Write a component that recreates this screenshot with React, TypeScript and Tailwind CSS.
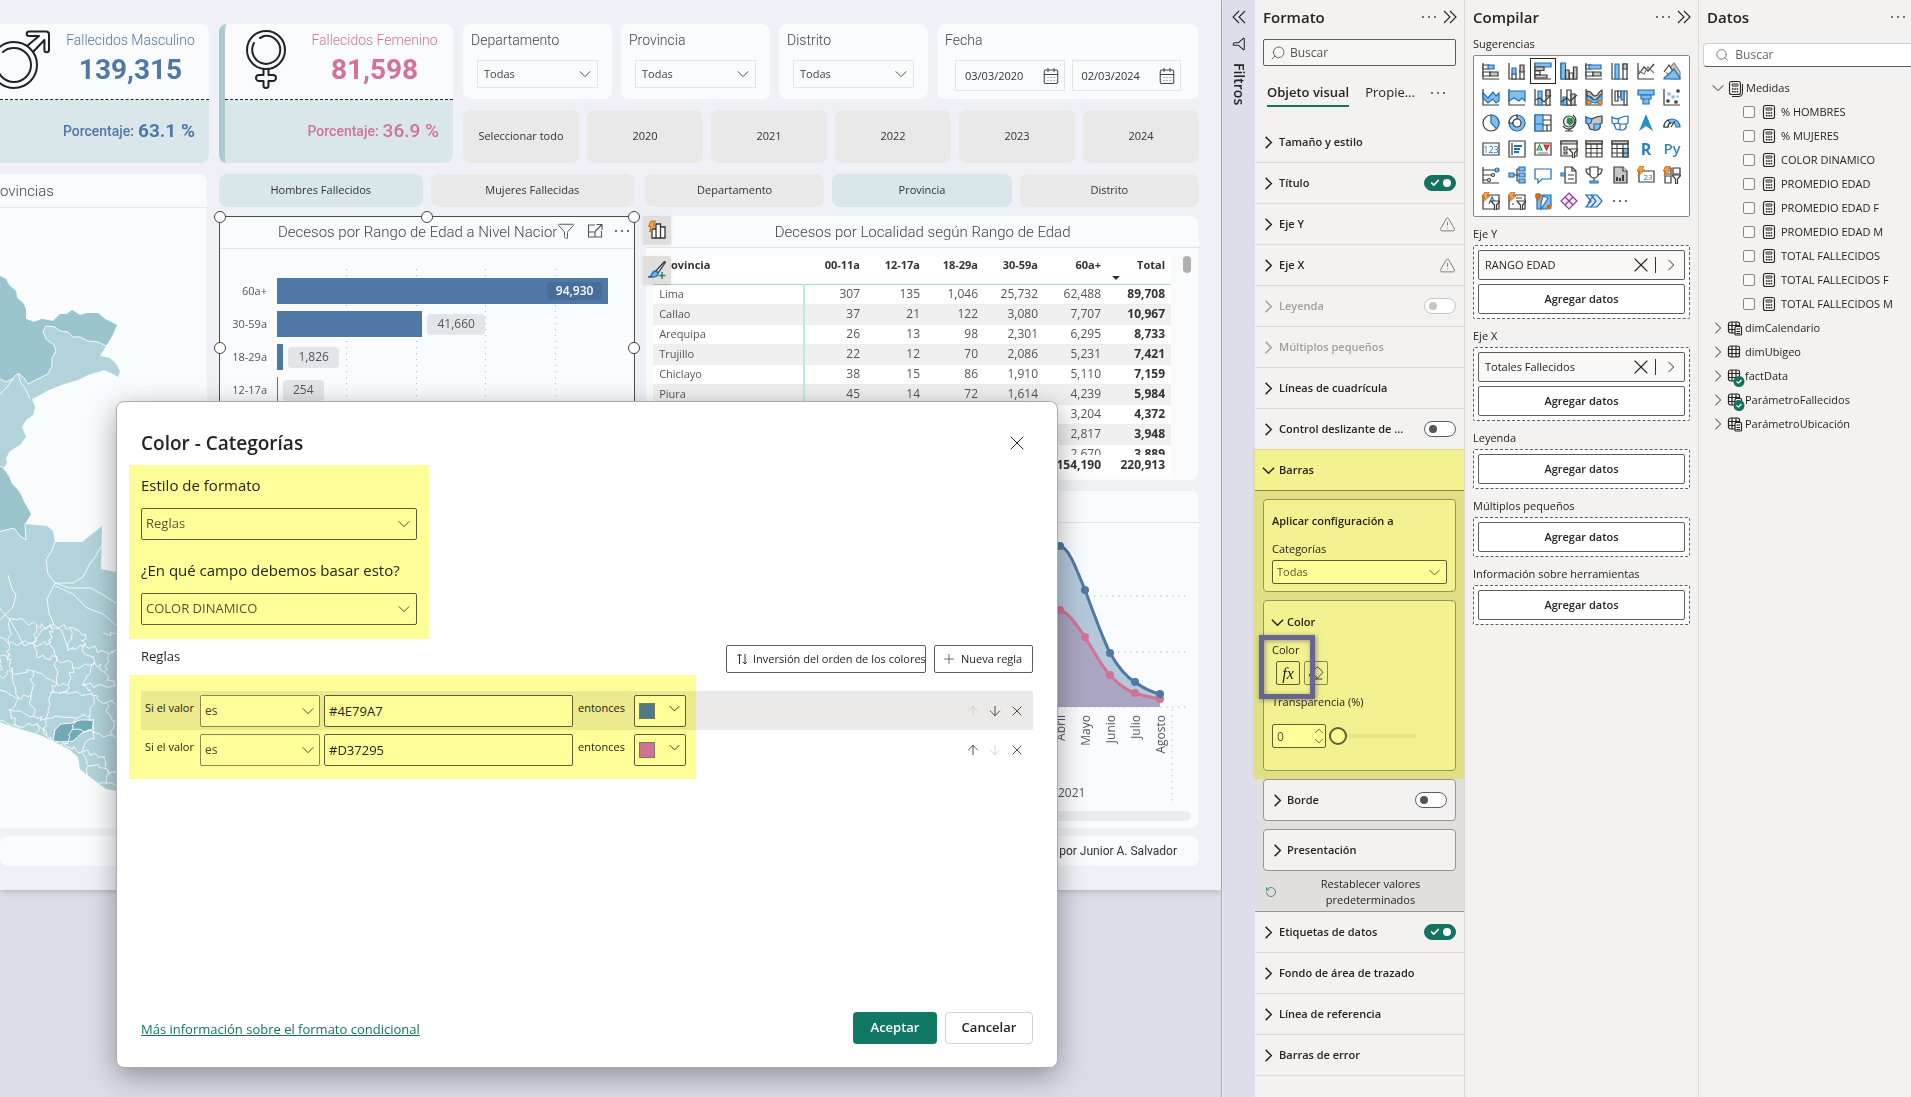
import type { ReactNode } from "react";
import { ArrowDown, ArrowUp, CalendarDays, Check, Eraser, Filter, Plus, RotateCcw, Search, TriangleAlert, X } from "lucide-react";

const UI = "font-['Open_Sans','Noto_Sans',sans-serif]";
const DIN = "font-[Roboto,'Open_Sans',sans-serif]";

/* ---------- shared controls ---------- */

const CHEVRONS = {
  right: "m5 2 6 6-6 6",
  down: "m2 5 6 6 6-6",
  up: "m2 11 6-6 6 6",
  left2: "M8 2 2 8l6 6M14 2 8 8l6 6",
  right2: "m2 2 6 6-6 6M8 2l6 6-6 6",
};

function Chevron({ dir, bold = false, className = "size-4" }: { dir: keyof typeof CHEVRONS; bold?: boolean; className?: string }) {
  return (
    <svg viewBox="0 0 16 16" className={`shrink-0 ${className}`} fill="none" stroke="currentColor" strokeWidth={bold ? 1.6 : 1.1}>
      <path d={CHEVRONS[dir]} />
    </svg>
  );
}

function Dots({ className = "" }: { className?: string }) {
  return (
    <button aria-label="Más opciones" className={`flex items-center gap-1 ${className}`}>
      <i className="size-0.5 rounded-full bg-[#444]" />
      <i className="size-0.5 rounded-full bg-[#444]" />
      <i className="size-0.5 rounded-full bg-[#444]" />
    </button>
  );
}

function Dropdown({
  label,
  value,
  box,
  icon = "right-[6px] size-[14px]",
}: {
  label: string;
  value: string;
  box: string;
  icon?: string;
}) {
  return (
    <div className="relative flex items-center">
      <select aria-label={label} className={`w-full appearance-none ${box}`}>
        <option>{value}</option>
      </select>
      <Chevron dir="down" className={`pointer-events-none absolute text-[#444] ${icon}`} />
    </div>
  );
}

function Toggle({ label, on = false, disabled = false }: { label: string; on?: boolean; disabled?: boolean }) {
  return (
    <span className="relative inline-flex h-4 w-8 shrink-0">
      <input
        type="checkbox"
        role="switch"
        aria-label={label}
        defaultChecked={on}
        disabled={disabled}
        className="h-4 w-8 appearance-none rounded-full border border-[#605e5c] bg-white checked:border-[#14735f] checked:bg-[#14735f] disabled:border-[#c8c6c4]"
      />
      {on ? (
        <>
          <Check strokeWidth={4} className="pointer-events-none absolute top-[3px] left-[6px] size-[10px] text-white" />
          <i className="pointer-events-none absolute top-1 right-[5px] size-2 rounded-full bg-white" />
        </>
      ) : (
        <i
          className={`pointer-events-none absolute top-1 left-[5px] size-2 rounded-full ${disabled ? "bg-[#c8c6c4]" : "bg-[#555]"}`}
        />
      )}
    </span>
  );
}

/* ---------- report cards ---------- */

function MaleIcon() {
  return (
    <svg viewBox="0 28 52 62" className="h-[62px] w-[52px] shrink-0" fill="none" stroke="#222" strokeWidth="2" strokeLinejoin="round" strokeLinecap="round">
      <circle cx="14" cy="65" r="23" />
      <path d="M-3 65a17 17 0 1 0 17-17q-7 0-11 4" />
      <path d="M27 46 39 36H29a2.300 2.300 0 0 1 0-4.600H46a3 3 0 0 1 3 3V50a2.300 2.300 0 0 1-4.600 0V40L33 52" />
    </svg>
  );
}

function FemaleIcon() {
  return (
    <svg viewBox="244 28 44 64" className="h-16 w-11 shrink-0" fill="none" stroke="#222" strokeWidth="2" strokeLinejoin="round" strokeLinecap="round">
      <circle cx="266" cy="50" r="19" />
      <path d="M254 43a14 14 0 1 0 10-7l-4 2" />
      <path d="M263.500 69v6H259a2.800 2.800 0 0 0 0 6h4.500v4.500a2.500 2.500 0 0 0 5 0V81h4.500a2.800 2.800 0 0 0 0-6h-4.500v-6" />
    </svg>
  );
}

function Kpi({
  icon,
  title,
  total,
  percent,
  tone,
  percentWeight,
  accent,
}: {
  icon: ReactNode;
  title: string;
  total: string;
  percent: string;
  tone: string;
  percentWeight: string;
  accent: boolean;
}) {
  return (
    <section
      className={`flex shrink-0 flex-col overflow-hidden rounded-r-lg bg-[#fafbfd] ${tone} ${
        accent ? "w-[234px] rounded-l-lg border-l-[6px] border-[#a9cbd1]" : "w-[209px]"
      }`}
    >
      <div className={`flex h-[76px] border-b border-dashed border-[#222] pt-1 ${accent ? "pl-[19px]" : ""}`}>
        {icon}
        <div className={`flex flex-1 flex-col items-center ${accent ? "pr-2 pl-4" : ""}`}>
          <h3 className={`text-[14px] leading-6 font-light ${DIN}`}>{title}</h3>
          <p className={`text-[28px] leading-9 font-bold ${DIN}`}>{total}</p>
        </div>
      </div>
      <p className={`flex flex-1 items-center justify-end bg-[#d9e6ea] pr-[14px] text-[14px] font-medium ${DIN}`}>
        Porcentaje:<span className={`ml-1 text-[19px] ${percentWeight}`}>{percent}</span>
      </p>
    </section>
  );
}

function FilterCard({ name }: { name: string }) {
  return (
    <section className="h-[75px] flex-1 rounded-lg bg-[#fafbfd] px-[14px] pt-1 text-[#444]">
      <h3 className={`-ml-[6px] h-8 text-[14px] leading-6 font-light ${DIN}`}>{name}</h3>
      <Dropdown label={name} value="Todas" box={`h-7 border border-[#e3e4e8] bg-[#fafbfd] pl-[6px] text-[11px] ${UI}`} />
    </section>
  );
}

function DateField({ label, value }: { label: string; value: string }) {
  return (
    <div className="relative flex flex-1 items-center">
      <input
        aria-label={label}
        defaultValue={value}
        className={`h-[31px] w-full border border-[#e3e4e8] bg-[#fafbfd] pl-[9px] text-[11px] text-[#333] ${UI}`}
      />
      <CalendarDays strokeWidth={1.4} className="pointer-events-none absolute right-[5px] size-[18px] text-[#444]" />
    </div>
  );
}

function Chip({ text, active = false, tall = false }: { text: string; active?: boolean; tall?: boolean }) {
  return (
    <button
      className={`flex-1 rounded-lg text-[11px] font-medium whitespace-nowrap text-[#333] ${tall ? "h-[53px]" : "h-[33px]"} ${
        active ? "bg-[#d9e6ea]" : "bg-[#e9e9ea]"
      } ${UI}`}
    >
      {text}
    </button>
  );
}

/* Deterministic jagged province borders. */
function provinceMesh() {
  let seed = 11;
  const rnd = () => {
    seed = (seed * 16807) % 2147483647;
    return seed / 2147483647 - 0.5;
  };
  const pts: number[][][] = [];
  for (let r = 0; r < 11; r++) {
    pts.push([]);
    for (let c = 0; c < 8; c++) pts[r].push([c * 19 - 6 + rnd() * 13, 622 + r * 17 + c * 2 + rnd() * 12]);
  }
  const seg = (a: number[], b: number[]) => {
    let d = `M${a[0].toFixed(1)} ${a[1].toFixed(1)}`;
    for (let i = 1; i < 5; i++) {
      const t = i / 5;
      d += `L${(a[0] + (b[0] - a[0]) * t + rnd() * 6).toFixed(1)} ${(a[1] + (b[1] - a[1]) * t + rnd() * 6).toFixed(1)}`;
    }
    return `${d}L${b[0].toFixed(1)} ${b[1].toFixed(1)}`;
  };
  let d = "";
  for (let r = 0; r < 11; r++)
    for (let c = 0; c < 8; c++) {
      if (c < 7 && (r + c * 3) % 5 !== 0) d += seg(pts[r][c], pts[r][c + 1]);
      if (r < 10 && (r * 2 + c) % 6 !== 0) d += seg(pts[r][c], pts[r + 1][c]);
    }
  return d;
}

const COUNTRY =
  "M0 276 6 279 9 285 16 291 17 298 23 303 26 309 26 319 34 322 42 319 53 321 60 314 67 314 72 310 80 315 88 313 98 313 105 319 117 325 112 336 106 346 100 356 110 358 116 364 120 371 118 377 111 373 104 370 98 372 88 375 78 380 64 384 49 390 40 395 32 399 35 407 33 415 26 420 22 427 26 437 20 445 10 451 6 458 7 463 3 469 8 474 12 484 20 492 24 502 31 514 25 524 47 526 53 531 55 542 82 542 92 534 102 526 101 569 116 572V791L106 789 90 777 80 769 78 757 70 750 53 741 40 735 24 730 10 726 0 722Z";

function PeruMap() {
  return (
    <svg viewBox="0 208 207 620" preserveAspectRatio="xMinYMin meet" className="h-[620px] w-[207px]">
      <defs>
        <clipPath id="country">
          <path d={COUNTRY} />
        </clipPath>
      </defs>
      <path d={COUNTRY} fill="#b1d3d9" />
      <g clipPath="url(#country)" stroke="#f4fafb" strokeWidth="1" strokeLinejoin="round">
        <path
          fill="#9ac5cc"
          d="M-2 270H125V325L106 346 98 342 88 341 80 337 73 337 68 332 60 331 55 327 46 326 43 331 46 339 54 345 56 351 52 358 52 366 48 374 40 378 28 384 24 378 18 373 12 379 6 382-2 378Z"
        />
        <path fill="#9ac5cc" d="M-2 466 3 467 34 514 25 524 26 540 20 536 14 528 6 530-2 532Z" />
        <path fill="#71a9b6" d="M53 741 55 730 61 724 72 723 80 720 94 720 92 730 83 732 73 741 61 742Z" />
        <g fill="none">
          <path d="M18 373 20 381 26 390 30 399M0 394 8 386 14 377M8 575 12 589 16 595 13 607 0 620M46 560 48 574 55 583 73 583 83 577 89 565 95 557 103 543M55 542 51 552 46 560M55 583 69 588 91 588 105 596 117 604M55 583 47 599 49 613 54 625 62 631 68 649M55 586 73 594 87 608 103 614 117 626M-2 606 10 620 18 634 24 646 34 642 42 630 54 624" />
          <path d={provinceMesh()} />
        </g>
      </g>
    </svg>
  );
}

const AGE_BARS = [
  { label: "60a+", value: 94930, inside: true },
  { label: "30-59a", value: 41660 },
  { label: "18-29a", value: 1826 },
  { label: "12-17a", value: 254 },
];

function Handle({ at }: { at: string }) {
  return <i className={`absolute z-10 size-3 -translate-1/2 rounded-full border border-[#444] bg-white ${at}`} />;
}

function AgeChart() {
  return (
    <section className="relative min-w-0 flex-[415] border border-[#4a4a4a] bg-[#fafbfd]">
      <Handle at="top-0 left-0" />
      <Handle at="top-0 left-1/2" />
      <Handle at="top-0 left-full" />
      <Handle at="top-1/2 left-0" />
      <Handle at="top-1/2 left-full" />
      <header className="flex h-8 items-center border-b border-[#dbe8ea] pl-[58px]">
        <h2 className={`min-w-0 flex-1 overflow-hidden text-[15px] font-light whitespace-nowrap text-[#444] ${DIN}`}>
          Decesos por Rango de Edad a Nivel Nacional
        </h2>
        <div className="mb-1 flex shrink-0 items-center gap-3 pr-[5px] text-[#555]">
          <button aria-label="Filtros del objeto visual">
            <Filter strokeWidth={1.3} className="size-[18px]" />
          </button>
          <button aria-label="Modo de enfoque">
            <svg viewBox="0 0 16 16" className="size-4" fill="none" stroke="currentColor" strokeWidth="1.100">
              <path d="M8 2H1.500v12h13V8M9.500 1.500H15V7M15 1.500 8 8.500M1.500 9H8v5" />
            </svg>
          </button>
          <Dots />
        </div>
      </header>
      <div className="relative mt-5 mr-2 ml-[57px] pt-[9px]">
        <div className="absolute inset-x-0 top-0 grid h-52 grid-cols-5">
          {[1, 2, 3, 4].map((n) => (
            <i
              key={n}
              className="ml-auto w-px bg-[repeating-linear-gradient(to_bottom,#b5b5b5_0px,#b5b5b5_1px,transparent_1px,transparent_6px)]"
            />
          ))}
        </div>
        {AGE_BARS.map((b) => (
          <div key={b.label} className={`relative mb-[7px] flex h-[26px] items-center text-[12px] whitespace-nowrap text-[#555] ${UI}`}>
            <span className="absolute right-full mr-[10px] text-[11px]">{b.label}</span>
            <div
              className={`flex h-full min-w-px items-center justify-end bg-[#4e79a7] ${b.inside ? "pr-[6px]" : ""}`}
              style={{ width: `${b.value / 1000}%` }}
            >
              {b.inside && (
                <span className="rounded bg-[#476e9b] px-[9px] text-[12px] font-semibold text-white">
                  {b.value.toLocaleString("en-US")}
                </span>
              )}
            </div>
            {!b.inside && (
              <span className="ml-[5px] flex h-[21px] items-center rounded bg-[#e4e5e9] px-[10px]">
                {b.value.toLocaleString("en-US")}
              </span>
            )}
          </div>
        ))}
      </div>
    </section>
  );
}

const HEAD = ["00-11a", "12-17a", "18-29a", "30-59a", "60a+", "Total"];
const ROWS = [
  ["Lima", "307", "135", "1,046", "25,732", "62,488", "89,708"],
  ["Callao", "37", "21", "122", "3,080", "7,707", "10,967"],
  ["Arequipa", "26", "13", "98", "2,301", "6,295", "8,733"],
  ["Trujillo", "22", "12", "70", "2,086", "5,231", "7,421"],
  ["Chiclayo", "38", "15", "86", "1,910", "5,110", "7,159"],
  ["Piura", "45", "14", "72", "1,614", "4,239", "5,984"],
  ["", "", "", "", "", "3,204", "4,372"],
  ["", "", "", "", "", "2,817", "3,948"],
  ["", "", "", "", "", "2,670", "3,889"],
];

function Columns() {
  return (
    <colgroup>
      <col />
      <col className="w-[62px]" />
      <col className="w-[60px]" />
      <col className="w-[58px]" />
      <col className="w-[60px]" />
      <col className="w-[63px]" />
      <col className="w-[64px]" />
    </colgroup>
  );
}

function LocalityTable() {
  return (
    <section className="relative min-w-0 flex-[554] rounded-lg bg-[#fafbfd]">
      <h2 className={`h-8 border-b border-[#dbe8ea] text-center text-[15px] leading-8 font-light text-[#444] ${DIN}`}>
        Decesos por Localidad según Rango de Edad
      </h2>
      <div className="mt-2 flex">
        <div className={`ml-[7px] flex-1 bg-white text-[12px] text-[#555] ${UI}`}>
          <div className="h-[199px] overflow-hidden">
            <table className="w-full table-fixed border-collapse">
              <Columns />
              <thead>
                <tr className="h-[28px] border-b border-[#9bdcd3] align-top text-[11px] leading-[18px] text-[#333]">
                  <th className="pl-[6px] text-left">Provincia</th>
                  {HEAD.map((h) => (
                    <th key={h} className="relative pr-[6px] text-right">
                      {h}
                      {h === "Total" && (
                        <i className="absolute bottom-1 left-[5px] border-x-4 border-t-4 border-x-transparent border-t-[#333]" />
                      )}
                    </th>
                  ))}
                </tr>
              </thead>
              <tbody>
                {ROWS.map((r, i) => (
                  <tr key={i} className="h-5 border-b border-[#ededed] leading-[18px] even:bg-[#f0f0f0]">
                    {r.map((v, c) => (
                      <td
                        key={c}
                        className={
                          c === 0
                            ? "border-r-2 border-[#b9ebe4] pl-[6px] text-[11px]"
                            : c === 6
                              ? "pr-[6px] text-right text-[12px] font-bold text-[#333]"
                              : "pr-[6px] text-right text-[12px]"
                        }
                      >
                        {v}
                      </td>
                    ))}
                  </tr>
                ))}
              </tbody>
            </table>
          </div>
          <table className="w-full table-fixed border-collapse">
            <Columns />
            <tbody>
              <tr className="h-5 font-bold text-[#333]">
                <td className="pl-[6px]">Total</td>
                <td />
                <td />
                <td />
                <td />
                <td className="pr-[6px] text-right">154,190</td>
                <td className="pr-[6px] text-right">220,913</td>
              </tr>
            </tbody>
          </table>
        </div>
        <div className="flex w-7 justify-center pl-1">
          <i className="h-[17px] w-2 rounded-full bg-[#b0b0b0]" />
        </div>
      </div>
      <div className="absolute top-0 -left-[3px] flex flex-col gap-3">
        <button aria-label="Compilar objeto visual" className="grid size-7 place-items-center bg-[#e1dfdd] shadow">
          <svg viewBox="0 0 20 20" className="size-5" fill="#fff" stroke="#333" strokeWidth="1.300">
            <path d="M5 9v9h4V9ZM9 4h4.500v14H9ZM13.500 7H18v11h-4.500Z" />
            <path d="M4 1h4.500L6.500 5H9l-6.500 7 1.500-5.500H1.500Z" fill="#f5a64a" stroke="#b0560c" strokeWidth=".8" />
          </svg>
        </button>
        <button aria-label="Dar formato al objeto visual" className="grid size-7 place-items-center bg-[#e1dfdd] shadow">
          <svg viewBox="0 0 20 20" className="size-5" fill="none" stroke="#333" strokeWidth="1.300">
            <path d="M9 11 17 2q2-1 1 1l-7 10Z" fill="#fff" />
            <path d="M1 17q3 0 4-3 1-3 4-3l2 2q0 4-5 4Z" fill="#6fb4ee" stroke="#1d6fb5" />
            <path d="M15 12v7M11.500 15.500h7" stroke="#3c8a54" strokeWidth="1.600" />
          </svg>
        </button>
      </div>
    </section>
  );
}

const MONTHS = [
  { name: "Abril", x: 1060, m: 546, f: 610 },
  { name: "Mayo", x: 1085, m: 590, f: 637 },
  { name: "Junio", x: 1110, m: 653, f: 675 },
  { name: "Julio", x: 1135, m: 682, f: 693 },
  { name: "Agosto", x: 1160, m: 694, f: 699 },
];
const MALE_LINE = "1040 560C1048 550 1052 544 1060 546C1069 548 1076 568 1085 590C1094 614 1101 634 1110 653C1118 667 1126 677 1135 682C1143 688 1151 692 1160 694";
const FEMALE_LINE = "1040 618C1048 611 1052 608 1060 610C1069 613 1076 624 1085 637C1094 651 1101 666 1110 675C1118 684 1126 690 1135 693C1143 696 1151 697 1160 699";

function MonthlyChart() {
  return (
    <section className="flex min-h-[336px] flex-1 flex-col rounded-lg bg-[#fafbfd]">
      <div className="h-8 shrink-0 border-b border-[#dbe8ea]" />
      <div className="flex justify-end">
        <svg viewBox="1040 523 159 288" className="h-[288px] w-[159px]">
          <path d="M1040 596H1188M1040 652H1188M1040 707H1188M1172 709V804" stroke="#bbb" strokeDasharray="1.500 4.500" fill="none" />
          <path d={`M${MALE_LINE}V707H1040Z`} fill="#b4c8db" />
          <path d={`M${FEMALE_LINE}V707H1040Z`} fill="#aaa5c2" />
          <path d={`M${FEMALE_LINE}`} fill="none" stroke="#d37295" strokeWidth="3" />
          {MONTHS.map((p) => (
            <circle key={p.name} cx={p.x} cy={p.f} r="4" fill="#d37295" />
          ))}
          <path d={`M${MALE_LINE}`} fill="none" stroke="#4e79a7" strokeWidth="3" />
          {MONTHS.map((p) => (
            <g key={p.name}>
              <circle cx={p.x} cy={p.m} r="4" fill="#4e79a7" />
              <text
                transform={`translate(${p.x + 5} 715) rotate(-90)`}
                textAnchor="end"
                fill="#555"
                className={`text-[12px] ${UI}`}
              >
                {p.name}
              </text>
            </g>
          ))}
          <text x="1058" y="797" fill="#555" className={`text-[12px] ${UI}`}>
            2021
          </text>
        </svg>
      </div>
      <i className="mr-2 ml-2 h-[10px] rounded-full bg-[#ebecee]" />
    </section>
  );
}

function Report() {
  return (
    <div className="flex flex-col bg-[#eff1f7] pt-6 pb-6 shadow-md">
      <div className="flex gap-[10px] pr-[22px]">
        <Kpi icon={<MaleIcon />} title="Fallecidos Masculino" total="139,315" percent="63.1 %" tone="text-[#4e79a7]" percentWeight="font-bold" accent={false} />
        <Kpi icon={<FemaleIcon />} title="Fallecidos Femenino" total="81,598" percent="36.9 %" tone="text-[#d37295]" percentWeight="font-medium" accent />
        <div className="flex flex-1 flex-col gap-[11px]">
          <div className="flex gap-[9px]">
            <FilterCard name="Departamento" />
            <FilterCard name="Provincia" />
            <FilterCard name="Distrito" />
            <section className="h-[75px] w-[262px] shrink-0 rounded-lg bg-[#fafbfd] pt-1 text-[#444]">
              <h3 className={`ml-2 h-8 text-[14px] leading-6 font-light ${DIN}`}>Fecha</h3>
              <div className="flex gap-[7px] pr-[18px] pl-[18px]">
                <DateField label="Fecha inicial" value="03/03/2020" />
                <DateField label="Fecha final" value="02/03/2024" />
              </div>
            </section>
          </div>
          <div className="grid grid-cols-6 gap-2">
            {["Seleccionar todo", "2020", "2021", "2022", "2023", "2024"].map((t) => (
              <Chip key={t} text={t} tall />
            ))}
          </div>
        </div>
      </div>

      <div className="mt-[11px] flex gap-3 pr-[22px]">
        <section className="w-[207px] shrink-0 overflow-hidden rounded-r-lg bg-[#fafbfd]">
          <h2 className={`h-[34px] border-b border-[#e3eaee] text-[15px] leading-[34px] font-light text-[#444] ${DIN}`}>ovincias</h2>
          <PeruMap />
        </section>
        <div className="flex min-w-0 flex-1 flex-col">
          <div className="flex gap-[11px]">
            <div className="flex min-w-0 flex-[415] gap-2">
              <Chip text="Hombres Fallecidos" active />
              <Chip text="Mujeres Fallecidas" />
            </div>
            <div className="flex min-w-0 flex-[554] gap-2">
              <Chip text="Departamento" />
              <Chip text="Provincia" active />
              <Chip text="Distrito" />
            </div>
          </div>
          <div className="mt-[9px] mb-[11px] flex h-[264px] gap-[11px]">
            <AgeChart />
            <LocalityTable />
          </div>
          <MonthlyChart />
        </div>
      </div>

      <footer className={`mt-2 mr-[22px] flex h-[30px] items-center justify-end rounded-lg bg-[#fafbfd] pr-[22px] text-[12px] text-[#333] ${DIN}`}>
        Elaborado por Junior A. Salvador
      </footer>
    </div>
  );
}

/* ---------- conditional colour dialog ---------- */

function Rule({ n, value, swatch, first }: { n: number; value: string; swatch: string; first: boolean }) {
  return (
    <div className={`flex h-[39px] items-center pr-2 pl-1 text-[12px] text-[#252423] ${first ? "bg-[#ebeae9]" : ""}`}>
      <label htmlFor={`rule-${n}`} className="mb-1 w-[55px] shrink-0 text-[11px] whitespace-nowrap">
        Si el valor
      </label>
      <div className="w-[120px]">
        <Dropdown label={`Condición ${n}`} value="es" box="h-8 rounded-xs border border-[#8a8886] bg-white pl-1 text-[12px] text-[#444]" icon="right-[5px] size-[14px]" />
      </div>
      <input
        id={`rule-${n}`}
        defaultValue={value}
        className="ml-1 h-8 w-[249px] rounded-xs border border-[#605e5c] bg-white pl-1 text-[13px] text-[#252423]"
      />
      <span className="mb-1 ml-[5px] w-14 text-[11px]">entonces</span>
      <button aria-label={`Color ${n}`} className="flex h-8 w-[52px] items-center justify-between rounded-xs border border-[#605e5c] bg-white px-1">
        <i className={`relative z-10 size-4 border border-[#7c7a5e] ${swatch}`} />
        <Chevron dir="down" className="mb-1 size-[13px]" />
      </button>
      <div className="ml-auto flex gap-[6px] text-[#333]">
        <button aria-label="Subir regla" disabled={first} className="disabled:text-[#ccc]">
          <ArrowUp strokeWidth={1.3} className="size-4" />
        </button>
        <button aria-label="Bajar regla" disabled={!first} className="disabled:text-[#ccc]">
          <ArrowDown strokeWidth={1.3} className="size-4" />
        </button>
        <button aria-label="Eliminar regla">
          <X strokeWidth={1.3} className="size-4" />
        </button>
      </div>
    </div>
  );
}

function ColorDialog() {
  const field = "h-8 rounded-xs border border-[#605e5c] bg-white pl-1 text-[13px] text-[#555]";
  const highlight = "pointer-events-none absolute bg-[#ffff99] mix-blend-multiply";
  return (
    <div
      role="dialog"
      aria-label="Color - Categorías"
      className={`absolute top-[401px] left-[116px] z-20 flex h-[667px] w-[942px] flex-col rounded-lg border border-[#aaa] bg-white px-6 pt-[27px] pb-[23px] text-[#252423] shadow-[0_8px_28px_rgba(0,0,0,0.35)] ${UI}`}
    >
      <div className="flex h-7 items-center justify-between">
        <h2 className="text-[19px] font-semibold">Color - Categorías</h2>
        <button aria-label="Cerrar" className="pr-1">
          <X strokeWidth={1} className="size-6" />
        </button>
      </div>

      <div className="relative mt-2 -ml-3 w-[300px] px-3 pt-[9px] pb-[14px]">
        <h3 className="mb-3 text-[15px] leading-[22px]">Estilo de formato</h3>
        <Dropdown label="Estilo de formato" value="Reglas" box={field} />
        <h3 className="mt-[19px] mb-3 text-[15px] leading-[22px]">¿En qué campo debemos basar esto?</h3>
        <Dropdown label="¿En qué campo debemos basar esto?" value="COLOR DINAMICO" box={field} />
        <i className={`${highlight} inset-0`} />
      </div>

      <div className="mt-1 flex h-8 items-center justify-end gap-2">
        <h3 className="mr-auto mb-1 text-[13px]">Reglas</h3>
        <button className="flex h-7 w-[200px] items-center gap-1 overflow-hidden rounded-xs border border-[#605e5c] pl-2 text-[11px] whitespace-nowrap">
          <svg viewBox="0 0 14 14" className="size-[14px] shrink-0" fill="none" stroke="#333">
            <path d="M4.500 12V2M2.500 4l2-2 2 2M10 2v10M8 10l2 2 2-2" />
          </svg>
          Inversión del orden de los colores
        </button>
        <button className="flex h-7 w-[99px] items-center gap-1 rounded-xs border border-[#605e5c] pl-[6px] text-[11px] whitespace-nowrap">
          <Plus strokeWidth={1} className="size-4 shrink-0" />
          Nueva regla
        </button>
      </div>

      <div className="relative pt-4 pb-[10px]">
        <Rule n={1} value="#4E79A7" swatch="bg-[#4d7a86]" first />
        <Rule n={2} value="#D37295" swatch="bg-[#d07195]" first={false} />
        <i className={`${highlight} top-0 bottom-0 -left-3 w-[567px]`} />
      </div>

      <div className="mt-auto flex items-center gap-2 text-[13px]">
        <a href="#mas-informacion" className="mt-1 mr-auto text-[#14735f] underline">
          Más información sobre el formato condicional
        </a>
        <button className="h-8 w-[84px] rounded bg-[#117865] font-semibold text-white">Aceptar</button>
        <button className="h-8 w-[88px] rounded border border-[#d1d1d1] font-semibold">Cancelar</button>
      </div>
    </div>
  );
}

/* ---------- format pane ---------- */

function PaneRow({ text, open = false, disabled = false, right }: { text: string; open?: boolean; disabled?: boolean; right?: ReactNode }) {
  return (
    <div
      className={`flex h-[41px] items-center border-b pr-2 pl-[6px] text-[11px] font-semibold ${
        open ? "border-[#8a8886]" : "border-[#dddbda]"
      } ${disabled ? "text-[#a19f9d]" : "text-[#252423]"}`}
    >
      <button disabled={disabled} className="flex flex-1 items-center gap-[3px] whitespace-nowrap">
        <Chevron dir={open ? "down" : "right"} bold className="size-[15px]" />
        {text}
      </button>
      {right}
    </div>
  );
}

function Warn() {
  return <TriangleAlert strokeWidth={1.3} className="size-[17px] text-[#777]" />;
}

function Card({ children, className = "" }: { children: ReactNode; className?: string }) {
  return <section className={`mx-2 rounded border border-[#979593] bg-[#f3f2f1] ${className}`}>{children}</section>;
}

function FormatPane() {
  return (
    <aside className="w-[210px] shrink-0 border-r border-[#dddbda] text-[12px] text-[#252423]">
      <header className="flex h-[34px] items-center justify-between pr-[6px] pl-2">
        <h2 className="text-[15px] font-semibold">Formato</h2>
        <span className="flex items-center gap-[6px]">
          <Dots />
          <button aria-label="Contraer Formato">
            <Chevron dir="right2" />
          </button>
        </span>
      </header>
      <label className="mx-2 mt-[5px] flex h-[27px] items-center gap-1 rounded-xs border border-[#605e5c] bg-white/30 px-[6px]">
        <Search strokeWidth={1.3} className="size-[18px] -scale-x-100 text-[#555]" />
        <input aria-label="Buscar en formato" placeholder="Buscar" className="w-full text-[12px] placeholder:text-[#555] focus:outline-none" />
      </label>
      <div className="flex h-[56px] items-center gap-4 pb-[2px] pl-3 whitespace-nowrap">
        <button className="border-b-2 border-[#14735f] pt-1 pb-[2px] text-[13px] font-semibold">Objeto visual</button>
        <button className="pb-px text-[13px]">Propie...</button>
        <Dots />
      </div>
      <PaneRow text="Tamaño y estilo" />
      <PaneRow text="Título" right={<Toggle label="Título" on />} />
      <PaneRow text="Eje Y" right={<Warn />} />
      <PaneRow text="Eje X" right={<Warn />} />
      <PaneRow text="Leyenda" disabled right={<Toggle label="Leyenda" disabled />} />
      <PaneRow text="Múltiplos pequeños" disabled />
      <PaneRow text="Líneas de cuadrícula" />
      <PaneRow text="Control deslizante de ..." right={<Toggle label="Control deslizante" />} />
      <div className="relative">
        <PaneRow text="Barras" open />
        <div className="flex flex-col gap-2 bg-[#e1dfdd] pt-2 pb-2 text-[11px]">
          <Card className="px-2 pt-3 pb-[7px]">
            <h3 className="leading-[18px] font-semibold">Aplicar configuración a</h3>
            <p className="mt-[10px] mb-[2px] leading-[18px]">Categorías</p>
            <Dropdown label="Categorías" value="Todas" box="h-6 rounded-xs border border-[#605e5c] bg-white pl-1 text-[11px] text-[#555]" icon="right-[6px] size-[13px]" />
          </Card>
          <Card className="h-[171px] px-2 pt-3">
            <button className="-ml-[2px] flex items-center gap-[2px] leading-[18px] font-semibold">
              <Chevron dir="down" bold className="size-[15px]" />
              Color
            </button>
            <p className="mt-[10px] leading-[18px]">Color</p>
            <div className="mt-[2px] flex gap-1 pl-1">
              <button aria-label="Formato condicional" className="grid size-6 place-items-center rounded-xs border border-[#605e5c] font-['Liberation_Serif',serif] text-base italic">
                fx
              </button>
              <button aria-label="Restablecer color" className="grid size-6 place-items-center rounded-xs border border-[#8a8886]">
                <Eraser strokeWidth={1.3} className="size-4" />
              </button>
            </div>
            <label htmlFor="transparency" className="mt-2 block leading-[18px]">
              Transparencia (%)
            </label>
            <div className="mt-[13px] flex items-center gap-[3px]">
              <span className="relative w-[54px]">
                <input id="transparency" defaultValue="0" className="h-6 w-full rounded-xs border border-[#605e5c] bg-white pl-1 text-[12px] text-[#555]" />
                <Chevron dir="up" className="pointer-events-none absolute top-[2px] right-[2px] size-[10px]" />
                <Chevron dir="down" className="pointer-events-none absolute right-[2px] bottom-[2px] size-[10px]" />
              </span>
              <input
                type="range"
                aria-label="Transparencia"
                defaultValue={0}
                className="h-[18px] w-[88px] appearance-none bg-transparent [&::-webkit-slider-runnable-track]:h-1 [&::-webkit-slider-runnable-track]:rounded-full [&::-webkit-slider-runnable-track]:bg-[#e6e4e2] [&::-webkit-slider-thumb]:-mt-[7px] [&::-webkit-slider-thumb]:size-[18px] [&::-webkit-slider-thumb]:appearance-none [&::-webkit-slider-thumb]:rounded-full [&::-webkit-slider-thumb]:border-2 [&::-webkit-slider-thumb]:border-[#605e5c] [&::-webkit-slider-thumb]:bg-white"
              />
            </div>
          </Card>
        </div>
        <i className="pointer-events-none absolute -top-px right-0 bottom-0 -left-[2px] bg-[#ffff99] mix-blend-multiply" />
        <i className="pointer-events-none absolute top-[185px] left-1 h-16 w-[56px] border-[5px] border-[#66668f] shadow-[1px_1px_5px_rgba(70,70,90,0.6),inset_1px_1px_5px_rgba(70,70,90,0.5)]" />
      </div>
      <div className="flex flex-col gap-2 border-b border-[#979593] bg-[#e1dfdd] text-[11px]">
        <Card className="flex h-[42px] items-center justify-between px-2 font-semibold">
          <button className="flex items-center gap-[2px]">
            <Chevron dir="right" bold className="-ml-[2px] size-[15px]" />
            Borde
          </button>
          <Toggle label="Borde" />
        </Card>
        <Card className="flex h-[42px] items-center px-2 font-semibold">
          <button className="flex items-center gap-[2px]">
            <Chevron dir="right" bold className="-ml-[2px] size-[15px]" />
            Presentación
          </button>
        </Card>
        <button className="-mt-[3px] flex items-center pb-[3px] pl-[10px] leading-4">
          <RotateCcw strokeWidth={1.5} className="size-3 text-[#14735f]" />
          <span className="flex-1 px-6">Restablecer valores predeterminados</span>
        </button>
      </div>
      <PaneRow text="Etiquetas de datos" right={<Toggle label="Etiquetas de datos" on />} />
      <PaneRow text="Fondo de área de trazado" />
      <PaneRow text="Línea de referencia" />
      <PaneRow text="Barras de error" />
    </aside>
  );
}

/* ---------- build pane ---------- */

const K = "#3b3a39";
const B = "#83bdec";
const S = "#1f6fb2";
const G = "#c8c6c4";
const AXES = <path d="M1 1v16h16" />;
const BOLT = <path d="M3 0h4L5 4h3L1 10l2-5H0Z" fill="#f6a44b" stroke="#c4610d" strokeWidth=".8" />;
const FUNNEL = <path d="M9 9h9l-3.500 4v5h-2v-5Z" fill="#fff" />;

const VISUALS: [string, ReactNode][] = [
  ["Barras apiladas", <>{AXES}<path d="M1 3h6v4H1ZM1 10h7v4H1Z" fill="#fff" /><path d="M6 3h6v4H6Z" fill={B} stroke={S} /><path d="M8 10h8v4H8Z" fill={G} /></>],
  ["Columnas apiladas", <>{AXES}<path d="M4 12h4v5H4ZM12 9h4v8h-4Z" fill="#fff" /><path d="M4 6h4v6H4Z" fill={B} stroke={S} /><path d="M12 3h4v7h-4Z" fill={G} /></>],
  ["Barras agrupadas", <>{AXES}<path d="M1 1h16v4H1Z" fill={B} stroke={S} /><path d="M1 5h9v3.500H1ZM1 13h12v3H1Z" fill={G} /><path d="M1 9h5v3.500H1Z" fill="#fff" /></>],
  ["Columnas agrupadas", <>{AXES}<path d="M1 1h4.500v16H1Z" fill={B} stroke={S} /><path d="M5.500 8H9v9H5.500ZM13.500 5H17v12h-3.500Z" fill={G} /><path d="M9.500 11H13v6H9.500Z" fill="#fff" /></>],
  ["Barras 100 %", <>{AXES}<path d="M1 3h5v4H1ZM1 10h7v4H1Z" fill="#fff" /><path d="M4 3h12v4H4Z" fill={B} stroke={S} /><path d="M8 10h8v4H8Z" fill={G} /></>],
  ["Columnas 100 %", <>{AXES}<path d="M4 2h4v15H4Z" fill={B} stroke={S} /><path d="M12 2h4v15h-4Z" fill="#fff" /><path d="M12 2h4v5h-4Z" fill={G} /></>],
  ["Líneas", <>{AXES}<path d="m2 12 5-7 4 4 6-7" /><path d="m2 9 5 3 4-7 6 6" stroke="#777" /></>],
  ["Áreas", <><path d="m3 10 8-9 6 9v7H8Z" fill={G} stroke="#888" /><path d="M1 10 6 3l5 8" fill="#fff" /><path d="m1 16 5-4 5-5 6 9v1H1Z" fill={B} stroke={S} /></>],
  ["Áreas apiladas", <>{AXES}<path d="m1 5 5 5 5-6 3 4 3-3v8l-3 2-3-4-5 4-5-5Z" fill={B} stroke={S} /></>],
  ["Áreas 100 %", <>{AXES}<path d="M1 3h16v10l-3-3-3 3-5-3-5 3Z" fill={B} stroke={S} /></>],
  ["Líneas y columnas apiladas", <>{AXES}<path d="M4 3h4v14H4Z" fill={B} stroke={S} /><path d="M12 2h4v15h-4Z" fill="#fff" /><path d="M12 2h4v6h-4Z" fill={G} /><path d="m1 12 5-2 4 4 7-7" /></>],
  ["Líneas y columnas agrupadas", <>{AXES}<path d="M3 9h4v8H3Z" fill={B} stroke={S} /><path d="M7 2h4v15H7Z" fill="#fff" /><path d="M11 6h4v11h-4Z" fill={G} /><path d="m1 14 6-4 3 3 7-6" /></>],
  ["Cinta", <>{AXES}<path d="M2 3c6 0 4 5 8 5s3-5 7-6v4c-3 0-4 6-7 6S7 7 2 8Z" fill={G} /><path d="M2 8c4 0 4 4 8 4s4-4 7-5v5c-3 0-4 3-7 3s-4-3-8-3Z" fill={B} stroke={S} /><path d="M2 13h4v3H2ZM13 13h4v3h-4Z" fill="#f2a25c" stroke="#c46a15" /></>],
  ["Cascada", <>{AXES}<path d="M4 3h3v10H4ZM13 3h3v14h-3Z" fill="#fff" /><path d="M7 3h3v6H7Z" fill="#fff" /><path d="M10 3h3v9h-3Z" fill={B} stroke={S} /></>],
  ["Embudo", <><path d="M1 2h16v5H1Z" fill={B} stroke={S} /><path d="M4 7h10v4H4ZM6 11h6v5H6Z" fill={B} stroke={S} /></>],
  ["Dispersión", <>{AXES}<path d="M4 12h2v2H4ZM14 2h2v2h-2ZM12 13h2v2h-2Z" fill={K} /><path d="M5 5h2v2H5ZM9 8h2v2H9ZM14 8h1v1h-1Z" fill={B} stroke={B} /></>],
  ["Circular", <><circle cx="9" cy="9" r="8" fill="#fff" /><path d="M9 9V1a8 8 0 0 1 5.500 13.700Z" fill={B} stroke={S} /></>],
  ["Anillos", <><circle cx="9" cy="9" r="8" fill={B} stroke={S} /><path d="M1 9a8 8 0 0 1 8-8v4a4 4 0 0 0-4 4Z" fill="#fff" /><circle cx="9" cy="9" r="4" fill="#fff" /></>],
  ["Treemap", <><path d="M1 1h16v16H1Z" fill="#fff" /><path d="M1 1h8v9H1ZM1 10h8v7H1Z" fill={B} stroke={S} /><path d="M9 6h8M9 11h8M13 11v6" /></>],
  ["Mapa", <><circle cx="9" cy="7.500" r="5.500" fill="#dff0e2" /><path d="M8 4l4 1 1 3-3 3-3-3Z" fill="#2f8a4c" stroke="#2f8a4c" /><path d="M13 1a8 8 0 0 1-4 14M9 15v2M5 17h8M3 12q3 4 8 3" /></>],
  ["Mapa coroplético", <><path d="M1 3q4 3 8 1t8-2v7l-2 1q1 5-3 6l-3 0-4-1-2-5-2-1Z" fill={G} /><path d="M9 10h6q1 4-3 6H9ZM1 3q3 2 6 1.500L6 9 3 10 1 9Z" fill={B} stroke={S} /></>],
  ["Mapa de formas", <><path d="M1 3q4 3 8 1t8-2v7l-2 1q1 5-3 6l-3 0-4-1-2-5-2-1Z" fill="#fff" stroke={S} /><path d="M9 16v-6h6M8 4 7 9l-4 1M7 9l2 1" stroke={S} /></>],
  ["Azure Maps", <path d="M9 0 2 17l7-5 7 5Z" fill="#2a8fc4" stroke="none" />],
  ["Medidor", <><path d="M1 13a8 8 0 0 1 16 0h-4a4 4 0 0 0-8 0Z" fill={B} stroke={S} /><path d="M1 13a8 8 0 0 1 4-7l2 3a4 4 0 0 0-2 4Z" fill="#fff" /><path d="m8 13 4-6" /></>],
  ["Tarjeta", <><path d="M1 3h16v12H1Z" fill="#fff" /><text x="9" y="12.500" textAnchor="middle" fontSize="9" fill={S} stroke="none">123</text></>],
  ["Tarjeta de varias filas", <><path d="M1 1h16v16H1Z" fill="#fff" /><path d="M4 3v12" /><path d="M6 6h8M6 9h6M6 12h5" stroke={S} strokeWidth="2" /></>],
  ["KPI", <><path d="M1 3h16v12H1Z" fill="#fff" /><path d="m3 10 2.500-5L8 10Z" fill="#bfe3c9" stroke="#2f8a4c" /><path d="m10 5 2.500 5L15 5Z" fill="#e2504c" stroke="#c22" /><path d="M4 13h10" strokeWidth=".7" /></>],
  ["Segmentación", <><path d="M1 1h16v15H1Z" fill="#fff" /><path d="M1 1h16v3H1Z" fill={G} /><path d="M4 7h3v3H4ZM4 12h3v2H4Z" />{FUNNEL}</>],
  ["Tabla", <><path d="M1 1h16v16H1Z" fill="#fff" /><path d="M1 1h16v3H1Z" fill={G} /><path d="M1 4h16M1 8.500h16M1 13h16M6 4v13M12 4v13" strokeWidth="1" /></>],
  ["Matriz", <><path d="M1 1h16v16H1Z" fill="#fff" /><path d="M1 1h16v3H1Z" fill={G} /><path d="M6 8.500h11V17H12V8.500Z" fill={B} /><path d="M1 4h16M1 8.500h16M1 13h16M6 4v13M12 4v13" strokeWidth="1" /></>],
  ["Objeto visual de R", <text x="9" y="15" textAnchor="middle" fontSize="16" fontWeight="700" fill="#2b7fc0" stroke="none">R</text>],
  ["Objeto visual de Python", <text x="9" y="14" textAnchor="middle" fontSize="15" fontWeight="600" fill="#3a86b8" stroke="none">Py</text>],
  ["Influenciadores", <><path d="M1 1v16h16M1 4h12M1 9h8M1 14h4" /><circle cx="15" cy="4" r="2" fill={B} stroke={S} /><circle cx="11" cy="9" r="1.500" fill="#fff" /><circle cx="7" cy="14" r="1.500" fill="#fff" /></>],
  ["Árbol de descomposición", <><path d="M6 9h5M9 3v12M9 3h3M9 15h3" /><path d="M1 7h5v4H1ZM11 1h6v4h-6ZM11 7h6v4h-6ZM11 13h6v4h-6Z" fill={B} stroke={S} /></>],
  ["Preguntas y respuestas", <path d="M1 3h16v10H8l-4 4v-4H1Z" fill="#fff" stroke={S} />],
  ["Narrativa", <><path d="M5 1h7l4 4v12H5Z" fill="#fff" /><path d="M12 1v4h4M8 9h6M8 13h6" /><path d="M1 7h4v3H1Z" fill={B} stroke={S} /></>],
  ["Objetivos", <><path d="M5 1h8v7a4 4 0 0 1-8 0ZM5 3H1q0 5 4 6M13 3h4q0 5-4 6M9 12v3" fill="#fff" /><path d="M5 15h8v2H5Z" fill={B} stroke={S} /></>],
  ["Informe paginado", <><path d="M3 1h9l4 4v12H3Z" fill={G} /><path d="M12 1v4h4" fill="#fff" /><path d="M6 11v4M9 12v3M12 9v6" strokeWidth="2" /></>],
  ["Tarjeta nueva", <><path d="M2 5h15v11H2Z" fill="#fff" /><text x="11" y="13.500" textAnchor="middle" fontSize="8" fill={S} stroke="none">23</text>{BOLT}</>],
  ["Segmentación de botones", <><path d="M2 2h6v6H2ZM10 2h7v6h-7ZM2 10h6v7H2Z" fill="#fff" />{FUNNEL}{BOLT}</>],
  ["Segmentación de texto", <><path d="M1 3h16v14H1Z" fill="#fff" /><path d="m7 12 3-7 3 6" stroke={S} />{FUNNEL}{BOLT}</>],
  ["Segmentación de lista", <><path d="M1 3h16v14H1Z" fill="#fff" /><path d="M8 6h6M4 12h2" />{FUNNEL}{BOLT}</>],
  ["ArcGIS", <><path d="M3 3h14v11l-4 3H3Z" fill={B} stroke={S} /><path d="m9 4 5 2-3 5-4 6 0-6Z" fill="#fff" stroke={S} /><path d="M4 9C1 6 1 5 1 4a3 3 0 0 1 6 0c0 1 0 2-3 5Z" fill="#d2691e" stroke="none" /><circle cx="15" cy="15" r="2.500" fill="#d2691e" stroke="none" /></>],
  ["Power Apps", <><path d="m9 1 8 8-8 8-8-8Z" fill="#f6ecf8" stroke="#8a3d9c" /><path d="m5 5 8 8M13 5l-8 8" stroke="#8a3d9c" /></>],
  ["Power Automate", <><path d="M1 3h11l5 6-5 6H1l5-6Z" fill="#dcebfa" stroke={S} /><path d="m6 3 5 6-5 6M9 3 3 11" stroke={S} /></>],
];

function DataWell({ label, field }: { label: string; field?: string }) {
  return (
    <section>
      <h3 className="flex h-7 items-center pt-[6px] text-[11px]">{label}</h3>
      <div className="flex flex-col gap-1 rounded-xs border border-dashed border-[#605e5c] bg-white p-1">
        {field && (
          <div className="flex h-[30px] items-center rounded-xs border border-[#605e5c] bg-[#faf9f8] pr-[6px] pl-[6px] text-[11px]">
            <span className="flex-1">{field}</span>
            <button aria-label={`Quitar ${field}`} className="pr-[2px]">
              <X strokeWidth={1.1} className="size-6" />
            </button>
            <button aria-label={`Opciones de ${field}`} className="flex h-4 items-center border-l border-[#333] pl-2">
              <Chevron dir="right" className="size-[14px]" />
            </button>
          </div>
        )}
        <button className="h-[30px] rounded-xs border border-[#605e5c] text-[11px] font-semibold">Agregar datos</button>
      </div>
    </section>
  );
}

function BuildPane() {
  return (
    <aside className="w-[234px] shrink-0 border-r border-[#dddbda] px-2 text-[#252423]">
      <header className="-mr-[2px] flex h-[34px] items-center justify-between">
        <h2 className="text-[15px] font-semibold">Compilar</h2>
        <span className="flex items-center gap-[6px]">
          <Dots />
          <button aria-label="Contraer Compilar">
            <Chevron dir="right2" />
          </button>
        </span>
      </header>
      <p className="flex h-[21px] items-center text-[11px]">Sugerencias</p>
      <div className="grid grid-cols-8 rounded-xs border border-[#8a8886] bg-white px-1 py-[2px]">
        {VISUALS.map(([name, art], i) => (
          <button key={name} aria-label={name} className={`grid h-[26px] place-items-center ${i === 2 ? "outline-1 -outline-offset-1 outline-[#252423]" : ""}`}>
            <svg viewBox="0 0 18 18" className="size-[18px]" fill="none" stroke={K} strokeWidth="1.200">
              {art}
            </svg>
          </button>
        ))}
        <Dots className="justify-center" />
      </div>
      <DataWell label="Eje Y" field="RANGO EDAD" />
      <DataWell label="Eje X" field="Totales Fallecidos" />
      <DataWell label="Leyenda" />
      <DataWell label="Múltiplos pequeños" />
      <DataWell label="Información sobre herramientas" />
    </aside>
  );
}

/* ---------- data pane ---------- */

function MeasureIcon({ stacked = false }: { stacked?: boolean }) {
  return (
    <svg viewBox="0 0 14 14" className="size-[14px] shrink-0 overflow-visible" fill="none" stroke="#252423">
      <rect x="1.500" y=".5" width="11" height="13" rx="2" strokeWidth="1.100" />
      <rect x="4" y="3" width="6" height="2" rx=".5" strokeWidth="1" />
      <path d="M4 8h1.500M6.300 8h1.500M8.600 8h1.500M4 10.800h1.500M6.300 10.800h1.500M8.600 10.800h1.500" strokeWidth="1.500" />
      {stacked && <path d="M14.500 3v9q0 3.500-3.500 3.500H4" strokeWidth="1" />}
    </svg>
  );
}

function TableIcon({ calc, checked }: { calc?: boolean; checked?: boolean }) {
  return (
    <svg viewBox="0 0 16 16" className="size-4 shrink-0 overflow-visible" fill="none" stroke="#252423" strokeWidth="1.200">
      <rect x="1.500" y="2" width="11" height="11" rx="2" />
      <path d="M5 2v11M9 2v11M1.500 5.500h11M1.500 9.500h11" />
      {calc && (
        <>
          <rect x="8" y="6.500" width="6.500" height="8.500" rx="1" fill="#f3f2f1" />
          <path d="M9.500 9h3.500M9.500 11.500h3.500M9.500 13.500h3.500" />
        </>
      )}
      {checked && (
        <>
          <circle cx="12" cy="13.500" r="5.500" fill="#14735f" stroke="none" />
          <path d="m9.500 13.500 2 1.500 3-3" stroke="#fff" />
        </>
      )}
    </svg>
  );
}

const MEASURES = [
  "% HOMBRES",
  "% MUJERES",
  "COLOR DINAMICO",
  "PROMEDIO EDAD",
  "PROMEDIO EDAD F",
  "PROMEDIO EDAD M",
  "TOTAL FALLECIDOS",
  "TOTAL FALLECIDOS F",
  "TOTAL FALLECIDOS M",
];
const TABLES = [
  { name: "dimCalendario", calc: true },
  { name: "dimUbigeo" },
  { name: "factData", checked: true },
  { name: "ParámetroFallecidos", calc: true, checked: true },
  { name: "ParámetroUbicación", calc: true },
];

function DataPane() {
  return (
    <aside className="w-[212px] shrink-0 text-[11px] whitespace-nowrap text-[#252423]">
      <header className="flex h-[34px] items-center justify-between pr-[6px] pl-2">
        <h2 className="text-[15px] font-semibold">Datos</h2>
        <Dots />
      </header>
      <label className="mt-[9px] ml-1 flex h-6 items-center gap-[6px] rounded-l border border-r-0 border-[#d1d1d1] border-b-[#605e5c] bg-white pl-[11px]">
        <Search strokeWidth={1.3} className="size-4 text-[#555]" />
        <input aria-label="Buscar datos" placeholder="Buscar" className="w-full text-[12px] placeholder:text-[#666] focus:outline-none" />
      </label>
      <ul className="pt-[9px]">
        <li>
          <button className="flex h-6 items-center pl-[12px]">
            <Chevron dir="down" className="mr-[3px] size-[14px]" />
            <MeasureIcon stacked />
            <span className="ml-1">Medidas</span>
          </button>
          <ul>
            {MEASURES.map((m) => (
              <li key={m}>
                <label className="flex h-6 items-center pl-11">
                  <input type="checkbox" className="size-3 appearance-none rounded-xs border border-[#8a8886] bg-white/40 checked:bg-[#14735f]" />
                  <span className="mr-[5px] ml-[7px]">
                    <MeasureIcon />
                  </span>
                  {m}
                </label>
              </li>
            ))}
          </ul>
        </li>
        {TABLES.map((t) => (
          <li key={t.name}>
            <button className="flex h-6 items-center gap-[2px] pl-[12px]">
              <Chevron dir="right" className="size-[14px]" />
              <TableIcon calc={t.calc} checked={t.checked} />
              {t.name}
            </button>
          </li>
        ))}
      </ul>
    </aside>
  );
}

export default function App() {
  return (
    <div className={`flex min-h-screen overflow-hidden bg-[#f3f2f1] ${UI}`}>
      <main className="relative min-w-0 flex-1 border-r border-[#a9acb4] bg-[#dcdce7]">
        <Report />
        <ColorDialog />
      </main>
      <aside className="flex w-[33px] shrink-0 flex-col items-center gap-3 border-l border-[#eee] bg-[#dedeea] pt-2 text-[#252423]">
        <button aria-label="Expandir filtros" className="pt-px">
          <Chevron dir="left2" className="size-4" />
        </button>
        <Filter strokeWidth={1.8} className="size-[14px] rotate-90" />
        <h2 className="text-[14px] font-semibold [writing-mode:vertical-rl]">Filtros</h2>
      </aside>
      <FormatPane />
      <BuildPane />
      <DataPane />
    </div>
  );
}
